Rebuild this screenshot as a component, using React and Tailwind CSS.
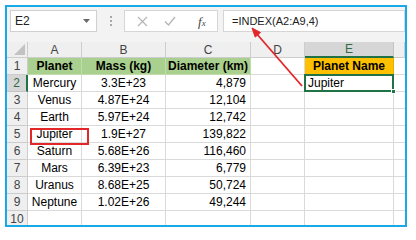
import React from "react";

const rows = [
    ["Planet", "Mass (kg)", "Diameter (km)", "", "Planet Name"],
    ["Mercury", "3.3E+23", "4,879", "", "Jupiter"],
    ["Venus", "4.87E+24", "12,104", "", ""],
    ["Earth", "5.97E+24", "12,742", "", ""],
    ["Jupiter", "1.9E+27", "139,822", "", ""],
    ["Saturn", "5.68E+26", "116,460", "", ""],
    ["Mars", "6.39E+23", "6,779", "", ""],
    ["Uranus", "8.68E+25", "50,724", "", ""],
    ["Neptune", "1.02E+26", "49,244", "", ""],
    ["", "", "", "", ""],
];

const letters = ["A", "B", "C", "D", "E"];

const HeaderCell = ({ children, active }) => (
    <div
        className={
            active
                ? "h-[16px] flex items-center justify-center bg-[#d6d6d6] border-r border-b-2 border-r-[#c4c4c4] border-b-[#217346] text-[#2f6b45] text-[12px]"
                : "h-[16px] flex items-center justify-center bg-[#efefef] border-r border-b border-[#cdcdcd] text-[#444] text-[12px]"
        }
    >
        {children}
    </div>
);

const RowHeader = ({ n, active }) => (
    <div
        className={
            active
                ? "h-[17px] flex items-center justify-center bg-[#d6d6d6] border-b border-r-2 border-b-[#c4c4c4] border-r-[#217346] text-[#2f6b45] text-[12px]"
                : "h-[17px] flex items-center justify-center bg-[#efefef] border-r border-b border-[#cdcdcd] text-[#444] text-[12px]"
        }
    >
        {n}
    </div>
);

const cellBase = "h-[17px] flex items-center border-r border-b whitespace-nowrap overflow-hidden text-[12px] text-black";

const Cell = ({ row, col, value }) => {
    if (row === 0) {
        if (col === 3) return <div className={`${cellBase} border-[#dadada]`} />;
        const bg = col === 4 ? "bg-[#ffc000] border-[#e6b000]" : "bg-[#a9d08e] border-[#c0dcab]";
        return (
            <div className={`${cellBase} ${bg} justify-center font-bold text-[11.5px]`}>{value}</div>
        );
    }
    let align = "justify-center";
    if (col === 2) align = "justify-end pr-[4px]";
    if (col === 4) align = "justify-start pl-[3px]";
    const selected = row === 1 && col === 4;
    return (
        <div className={`${cellBase} border-[#dadada] ${align} ${selected ? "relative overflow-visible" : ""}`}>
            {value}
            {selected && (
                <>
                    <div className="absolute -left-px -top-px -right-px -bottom-px border-2 border-[#217346]" />
                    <div className="absolute -right-[3px] -bottom-[3px] w-[5px] h-[5px] bg-[#217346] border border-white" />
                </>
            )}
        </div>
    );
};

export default function App() {
    return (
        <div className="relative w-[416px] h-[229px] bg-white font-['Liberation_Sans',Arial,sans-serif] overflow-hidden">
            <div className="ml-[5px] mt-[5px] w-[402px] h-[222px] border-2 border-[#19a9e8] flex flex-col overflow-hidden">
                {/* Formula bar */}
                <div className="h-[35px] shrink-0 bg-[#f3f3f3] flex items-start pt-[3px] pl-[3px]">
                    <div className="w-[87px] h-[22px] bg-white border border-[#d0d0d0] flex items-center justify-between pl-[4px] pr-[6px] text-[12px] text-[#222]">
                        <span>E2</span>
                        <svg width="7" height="4" viewBox="0 0 7 4">
                            <path d="M0 0 L7 0 L3.5 4 Z" fill="#6a6a6a" />
                        </svg>
                    </div>
                    <div className="w-[27px] h-[22px] flex flex-col items-center justify-center gap-[2px]">
                        <span className="w-[2px] h-[2px] bg-[#a8a8a8]" />
                        <span className="w-[2px] h-[2px] bg-[#a8a8a8]" />
                        <span className="w-[2px] h-[2px] bg-[#a8a8a8]" />
                    </div>
                    <div className="w-[94px] h-[22px] bg-white border border-[#d6d6d6] flex items-center pl-[12px]">
                        <svg width="11" height="11" viewBox="0 0 11 11">
                            <path d="M1 1 L10 10 M10 1 L1 10" stroke="#b5b5b5" strokeWidth="1.2" fill="none" />
                        </svg>
                        <svg width="12" height="10" viewBox="0 0 12 10" className="ml-[16px]">
                            <path d="M1 5.5 L4.5 9 L11 1" stroke="#b5b5b5" strokeWidth="1.3" fill="none" />
                        </svg>
                        <span className="ml-[22px] font-['Liberation_Serif',serif] italic text-[13px] text-[#444] leading-none">
                            f<span className="text-[9px]">x</span>
                        </span>
                    </div>
                    <div className="ml-[5px] flex-1 h-[22px] bg-white border border-[#d6d6d6] flex items-center pl-[8px] text-[11px] text-[#222]">
                        =INDEX(A2:A9,4)
                    </div>
                </div>

                {/* Sheet */}
                <div className="grid grid-cols-[21px_54px_84px_85px_54px_89px_1fr] overflow-hidden flex-1 content-start">
                    <div className="h-[16px] bg-[#efefef] border-r border-b border-[#cdcdcd] flex items-end justify-end pr-[2px] pb-[2px]">
                        <svg width="11" height="11" viewBox="0 0 11 11">
                            <path d="M11 0 L11 11 L0 11 Z" fill="#c2c2c2" />
                        </svg>
                    </div>
                    {letters.map((l, i) => (
                        <HeaderCell key={l} active={i === 4}>
                            {l}
                        </HeaderCell>
                    ))}
                    <HeaderCell />
                    {rows.map((r, ri) => (
                        <React.Fragment key={ri}>
                            <RowHeader n={ri + 1} active={ri === 1} />
                            {r.map((v, ci) => (
                                <Cell key={ci} row={ri} col={ci} value={v} />
                            ))}
                            <div className="h-[17px] border-b border-[#dadada]" />
                        </React.Fragment>
                    ))}
                </div>
            </div>

            {/* Red highlight around Jupiter */}
            <div className="absolute left-[30px] top-[128px] w-[59px] h-[17px] border-2 border-[#e3262a]" />

            {/* Red arrow */}
            <svg className="absolute left-0 top-0 pointer-events-none" width="416" height="229" viewBox="0 0 416 229">
                <line x1="302" y1="86" x2="256" y2="33" stroke="#e3262a" strokeWidth="1.8" />
                <path d="M252 28 L255.2 37.1 L260.5 32.5 Z" fill="#e3262a" stroke="#e3262a" strokeWidth="1" />
            </svg>
        </div>
    );
}
